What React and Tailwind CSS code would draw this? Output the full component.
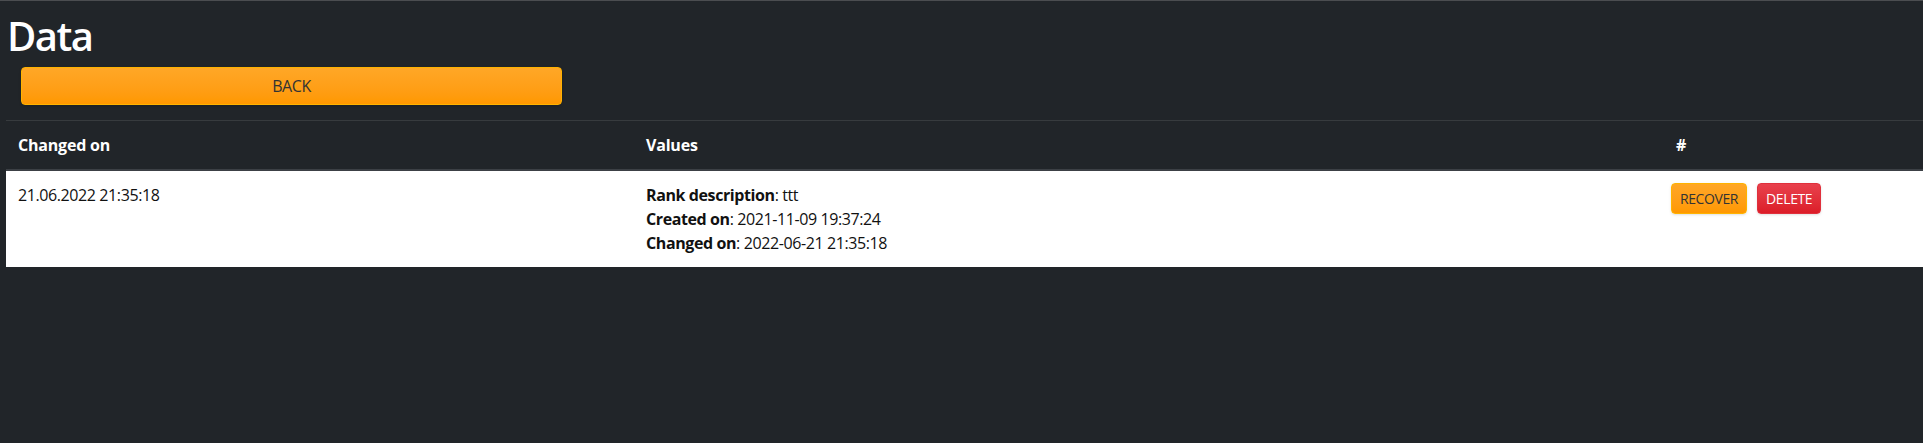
import React from "react";

const rows = [
  {
    changedOn: "21.06.2022 21:35:18",
    values: [
      ["Rank description", "ttt"],
      ["Created on", "2021-11-09 19:37:24"],
      ["Changed on", "2022-06-21 21:35:18"],
    ],
  },
];

export default function App() {
  return (
    <main
      className="min-h-[443px] w-full bg-[#212529] border-t border-[#4b4d50] text-[16px] tracking-[-0.4px]"
      style={{ fontFamily: '"Open Sans", "Noto Sans", sans-serif' }}
    >
      <h1 className="pl-[7px] pt-[11px] text-[40px] leading-[48px] font-semibold tracking-[-1.5px] text-white">
        Data
      </h1>
      <div className="pl-[21px] pt-[7px]">
        <button className="w-[541px] h-[38px] rounded-[4px] border border-[#ffb300] bg-gradient-to-b from-[#ffa726] to-[#ff9800] text-[16px] text-[#333] shadow-sm">
          BACK
        </button>
      </div>

      {/* table */}
      <div className="ml-[6px] mt-[15px] border-t border-[#373b3e]">
        <div className="grid grid-cols-[628px_1030px_1fr] border-b-2 border-[#3c4045] font-bold text-white tracking-[-0.2px]">
          <div className="p-3 leading-6">Changed on</div>
          <div className="p-3 leading-6">Values</div>
          <div className="p-3 leading-6">#</div>
        </div>
        {rows.map((row, i) => (
          <div
            key={i}
            className="grid grid-cols-[628px_1030px_1fr] bg-white text-[#111]"
          >
            <div className="p-3 leading-6">{row.changedOn}</div>
            <div className="p-3 leading-6">
              {row.values.map(([label, value]) => (
                <div key={label}>
                  <strong>{label}</strong>: {value}
                </div>
              ))}
            </div>
            <div className="py-3 pl-[7px] flex items-start gap-[10px]">
              <button className="h-[31px] px-2 rounded-[4px] border border-[#ffb300] bg-gradient-to-b from-[#ffa726] to-[#ff9800] text-[14px] text-[#333] shadow-sm">
                RECOVER
              </button>
              <button className="h-[31px] px-2 rounded-[4px] border border-[#e0303c] bg-gradient-to-b from-[#e8404c] to-[#dc1c28] text-[14px] text-white shadow-sm">
                DELETE
              </button>
            </div>
          </div>
        ))}
      </div>
    </main>
  );
}
